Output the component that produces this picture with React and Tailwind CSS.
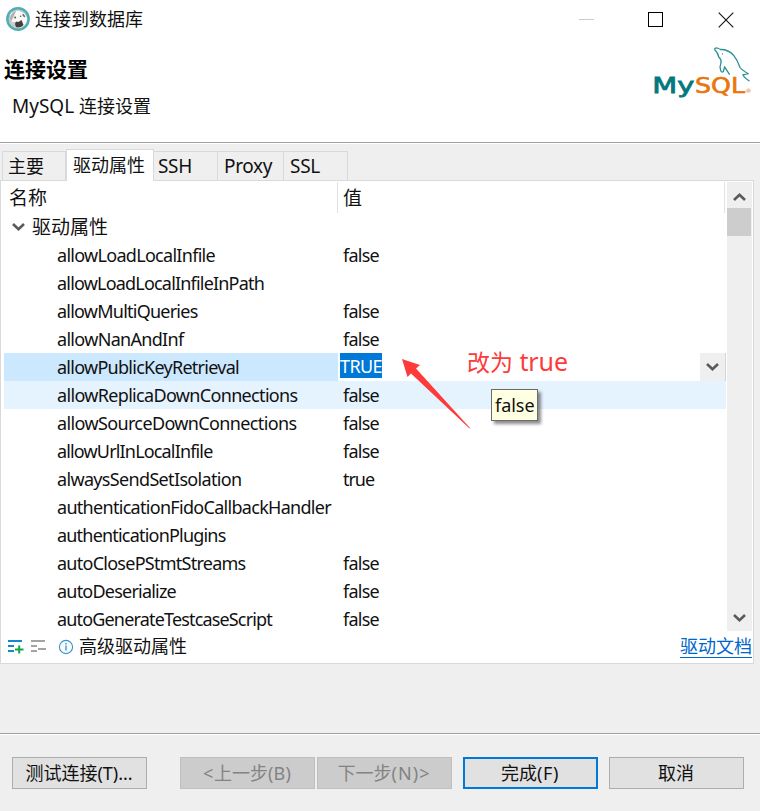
import { useLayoutEffect, useRef, useState } from "react";

// Text tracked so that the run takes exactly `w` pixels.
function Fit({ w, className = "", children }) {
  const ref = useRef(null);
  const [spacing, setSpacing] = useState(0);
  useLayoutEffect(() => {
    const el = ref.current;
    const natural = el.getBoundingClientRect().width;
    setSpacing((w - natural) / el.textContent.length);
  }, [w]);
  return (
    <span ref={ref} className={`inline-block whitespace-pre ${className}`} style={{ letterSpacing: `${spacing}px` }}>
      {children}
    </span>
  );
}

const ROWS = [
  ["allowLoadLocalInfile", 158, "false"],
  ["allowLoadLocalInfileInPath", 207, ""],
  ["allowMultiQueries", 140.5, "false"],
  ["allowNanAndInf", 126.5, "false"],
  ["allowPublicKeyRetrieval", 182, "TRUE"],
  ["allowReplicaDownConnections", 240.5, "false"],
  ["allowSourceDownConnections", 239.5, "false"],
  ["allowUrlInLocalInfile", 155.5, "false"],
  ["alwaysSendSetIsolation", 184.5, "true"],
  ["authenticationFidoCallbackHandler", 274, ""],
  ["authenticationPlugins", 168.5, ""],
  ["autoClosePStmtStreams", 188.5, "false"],
  ["autoDeserialize", 119, "false"],
  ["autoGenerateTestcaseScript", 215, "false"],
];

function Chevron({ up = false }) {
  return (
    <svg width="13" height="10" viewBox="0 0 13 10" className={up ? "rotate-180" : ""}>
      <path d="M1 2 L6.5 7.2 L12 2" fill="none" stroke="#5a5a5a" strokeWidth="2.6" />
    </svg>
  );
}

function AppIcon() {
  return (
    <svg width="24" height="24" viewBox="0 0 24 24">
      <circle cx="12" cy="12" r="11.9" fill="#4faeb5" />
      <circle cx="12" cy="12" r="9.4" fill="#c9cdcb" />
      <path d="M4 8 C6 3 12 3 15 5 C19 6 21 9 21 13 C20 18 16 21 12 21 L10 15 L6 15 Z" fill="#fafaf8" />
      <path d="M4 10 C6 5 8 4 10 4 L8 9 L6 13 L4 14 Z" fill="#b5b4b0" />
      <path d="M10 14.5 C12 15.5 13 15 15.5 13 L17.5 18 C16 20 13 21 10 20 L9 17 Z" fill="#453f3e" />
      <path d="M17 6.5 l2.4 2.8 -1.2 1.2 -2 -2.6z" fill="#6f6a67" />
      <circle cx="9.2" cy="10.5" r="1" fill="#5d5652" />
      <circle cx="14.6" cy="9.2" r="0.8" fill="#5d5652" />
    </svg>
  );
}

function MySqlLogo() {
  return (
    <svg width="100" height="54" viewBox="652 46 100 54">
      <g fill="none" stroke="#2b8f92" strokeWidth="1.3" strokeLinejoin="round" strokeLinecap="round">
        <path d="M729.3 74.2 L726.2 69.3 L724.6 66.8 L723.4 71.5 Q721.8 73 720.7 70.5 Q719.4 66.5 721 62.8 Q721.6 59.5 718.8 57 Q717.6 52.5 714.8 49.8 Q714.2 47.8 717.2 48 Q718.8 48.5 720.4 49.5 Q728 49.2 733.5 55.2 Q737.5 60 740 67.5 Q741.5 69.8 748.3 73.7 L742.8 74.8 Q744 77.5 749 80.8" />
      </g>
      <circle cx="722.5" cy="54" r="0.7" fill="#2b8f92" />
      <g fontFamily="DejaVu Sans" fontSize="20.5">
        <text x="652.3" y="92.5" fill="#04797d" stroke="#04797d" strokeWidth="0.8" textLength="42" lengthAdjust="spacingAndGlyphs">My</text>
        <text x="695" y="92.5" fill="#ea750c" stroke="#ea750c" strokeWidth="0.6" textLength="50" lengthAdjust="spacingAndGlyphs">SQL</text>
        <text x="745.5" y="93" fill="#ea750c" fontSize="6">®</text>
      </g>
    </svg>
  );
}

function Tab({ children, className }) {
  return <div className={`h-[29px] border-t border-r border-[#d9d9d9] bg-[#efefef] leading-[29px] ${className}`}>{children}</div>;
}

function Value({ value }) {
  if (value === "TRUE") {
    return (
      <>
        <div className="ml-0.5 h-[25px] w-[42px] bg-[#0078d7] leading-[27px] text-white">
          <Fit w={42}>TRUE</Fit>
        </div>
        <div className="ml-auto flex h-7 w-[26px] items-center justify-center border-r border-[#d5d5d5] bg-[#efefef]">
          <Chevron />
        </div>
      </>
    );
  }
  return <div className="ml-[5px]">{value && <Fit w={value === "true" ? 31 : 36}>{value}</Fit>}</div>;
}

function Button({ children, className }) {
  return <div className={`flex h-8 w-[135px] shrink-0 items-center justify-center pr-px ${className}`}>{children}</div>;
}

export default function App() {
  return (
    <div className="relative flex h-[811px] w-[760px] flex-col overflow-hidden bg-[#efefef] font-['Noto_Sans','Noto_Sans_CJK_SC',sans-serif] text-[18px] text-[#111]">
      <div className="flex h-[143px] shrink-0 justify-between border-b border-[#a0a0a0] bg-white">
        <div className="flex flex-col">
          <div className="flex h-[38px] items-center pl-1.5">
            <AppIcon />
            <span className="ml-[5px] leading-[38px]">连接到数据库</span>
          </div>
          <div className="mt-4 pl-1 text-[21px] leading-[30px] font-bold text-black">连接设置</div>
          <div className="mt-[7px] pl-3 leading-[30px]">
            <Fit w={67} className="text-[19px]">MySQL </Fit>连接设置
          </div>
        </div>
        <div className="flex flex-col items-end">
          <div className="flex h-[39px] items-center pr-[26px]">
            <div className="mr-[54px] h-px w-[15px] bg-[#cbcbcb]" />
            <div className="mr-[55px] h-[15px] w-[15px] border border-black" />
            <svg width="16" height="16" viewBox="0 0 16 16">
              <path d="M0.7 0.7 L15.3 15.3 M15.3 0.7 L0.7 15.3" stroke="#111" strokeWidth="1.1" />
            </svg>
          </div>
          <div className="mt-[7px] pr-2">
            <MySqlLogo />
          </div>
        </div>
      </div>
      <div className="h-px shrink-0 bg-white" />

      <div className="mt-[5px] flex h-8 shrink-0 items-end pl-0.5">
        <Tab className="mb-px w-16 border-l pl-[5px]">主要</Tab>
        <div className="h-8 w-[88px] border-x border-t border-[#d9d9d9] bg-white pl-[6px] leading-[31px]">驱动属性</div>
        <Tab className="mb-px w-16 pl-1"><Fit w={34} className="text-[19px]">SSH</Fit></Tab>
        <Tab className="mb-px w-[66px] pl-1.5"><Fit w={48} className="text-[19px]">Proxy</Fit></Tab>
        <Tab className="mb-px w-16 pl-1.5"><Fit w={30} className="text-[19px]">SSL</Fit></Tab>
      </div>

      <div className="-mt-px flex">
        <div className="h-px w-[67px] bg-[#d9d9d9]" />
        <div className="h-px w-[86px] bg-white" />
        <div className="h-px w-[601px] bg-[#d9d9d9]" />
      </div>
      <div className="flex h-[483px] w-[754px] shrink-0 flex-col border-x border-b border-[#d9d9d9] bg-white">
        <div className="flex h-[450px] shrink-0 pt-px">
          <div className="flex w-[726px] flex-col overflow-hidden pl-[3px]">
            <div className="flex h-[31px] shrink-0 text-[19px] leading-[33px]">
              <div className="w-[334px] border-r border-[#e2e2e2] pl-[5px]">名称</div>
              <div className="w-[387px] border-r border-[#e2e2e2] pl-[5px]">值</div>
            </div>
            <div className="flex h-7 shrink-0 items-center pl-2 text-[19px] leading-7">
              <Chevron />
              <span className="ml-[7px]">驱动属性</span>
            </div>
            {ROWS.map(([name, w, value], i) => (
              <div key={name} className={`flex h-7 w-[722px] shrink-0 leading-[29px] ${i === 5 ? "bg-[#e5f3ff]" : ""}`}>
                <div className={`w-[334px] shrink-0 pl-[53px] ${i === 4 ? "bg-[#cce8ff]" : ""}`}>
                  <Fit w={w}>{name}</Fit>
                </div>
                <div className="flex flex-1"><Value value={value} /></div>
              </div>
            ))}
          </div>
          <div className="flex w-[25px] flex-col items-center bg-[#efefef]">
            <div className="flex h-[26px] items-center pt-[3px]"><Chevron up /></div>
            <div className="mr-px h-7 w-6 bg-[#cdcdcd]" />
            <div className="mt-auto flex h-[26px] items-center"><Chevron /></div>
          </div>
        </div>
        <div className="flex h-[31px] items-center pl-[7px] leading-[29px]">
          <svg width="16" height="14" viewBox="0 0 16 14">
            <path d="M0 1h14M0 6h6M0 11h6" stroke="#1488cc" strokeWidth="2" />
            <path d="M7 9.5h8.5M11.2 5.5v8" stroke="#12a84a" strokeWidth="2" />
          </svg>
          <svg width="16" height="14" viewBox="0 0 16 14" className="ml-[7px]">
            <path d="M0 1h14M0 6h6M0 11h6M7 9h8" stroke="#a3a3a3" strokeWidth="2" />
          </svg>
          <svg width="16" height="16" viewBox="0 0 16 16" className="ml-[11px]">
            <circle cx="8" cy="8" r="6.6" fill="#f7fbfe" stroke="#3a93cd" strokeWidth="1.1" />
            <path d="M8 6.6v5M8 4v1.5" stroke="#4c9bd0" strokeWidth="1.5" />
          </svg>
          <span className="ml-[5px]">高级驱动属性</span>
          <span className="relative mr-px ml-auto text-[#0066cc]">
            驱动文档
            <span className="absolute bottom-[3px] left-0 h-px w-full bg-[#0066cc]" />
          </span>
        </div>
      </div>

      <div className="mt-auto h-[78px] shrink-0 border-t border-[#a0a0a0]">
        <div className="h-px bg-white" />
        <div className="flex pt-[22px] pl-3">
          <Button className="border border-[#adadad] bg-[#e1e1e1]">测试连接<Fit w={35}>(T)...</Fit></Button>
          <Button className="ml-[33px] border border-[#bfbfbf] bg-[#cccccc] text-[#838383]"><Fit w={11}>&lt;</Fit>上一步<Fit w={23}>(B)</Fit></Button>
          <Button className="ml-0.5 border border-[#bfbfbf] bg-[#cccccc] text-[#838383]">下一步<Fit w={39}>(N)&gt;</Fit></Button>
          <Button className="ml-[11px] border-2 border-[#0078d7] bg-[#e1e1e1]">完成<Fit w={22}>(F)</Fit></Button>
          <Button className="ml-[11px] border border-[#adadad] bg-[#e1e1e1]">取消</Button>
        </div>
      </div>

      <svg className="absolute top-[355px] left-[400px]" width="74" height="76" viewBox="400 355 74 76">
        <path d="M402 359 L420 365 L416 368.5 L470.5 428.5 L469 428 L411 373.5 L407.5 377 Z" fill="#fe3a3a" />
      </svg>
      <div className="absolute top-[345px] left-[467px] text-[23px] leading-8 whitespace-nowrap text-[#fe3a3a]">
        改为<Fit w={55} className="text-[25px]"> true</Fit>
      </div>
      <div className="absolute top-[389px] left-[491px] h-8 w-[47px] border border-[#6b6b6b] bg-[#ffffe1] pl-[3px] leading-[31px] shadow-[3px_3px_3px_rgba(0,0,0,0.45)]">
        <Fit w={39.5}>false</Fit>
      </div>
    </div>
  );
}
